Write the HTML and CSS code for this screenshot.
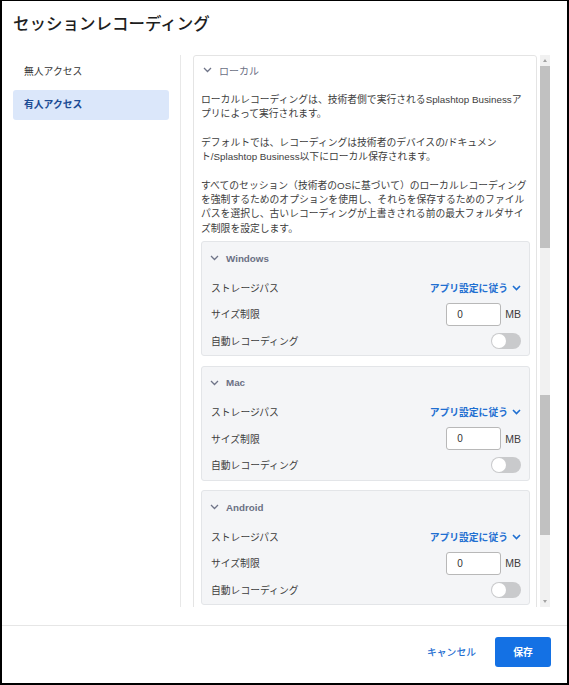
FILE: index.html
```html
<!DOCTYPE html>
<html lang="ja">
<head>
<meta charset="utf-8">
<link rel="stylesheet" href="styles.css">
</head>
<body>
<div class="frame">
  <div class="header"><h1 class="title">セッションレコーディング</h1></div>
  <div class="main">
    <nav class="nav">
      <div class="nav-item">無人アクセス</div>
      <div class="nav-item active">有人アクセス</div>
    </nav>
    <div class="vdivider"></div>
    <div class="scroll">
      <div class="viewport">
        <div class="card">
          <div class="section-head">
            <svg class="chev" width="9" height="6" viewBox="0 0 9 6"><polyline points="1,1 4.5,4.5 8,1" fill="none" stroke="#6f7488" stroke-width="1.3"/></svg>
            <span>ローカル</span>
          </div>
          <p class="para">ローカルレコーディングは、技術者側で実行されるSplashtop Businessアプリによって実行されます。</p>
          <p class="para">デフォルトでは、レコーディングは技術者のデバイスの/ドキュメン<span class="nw">ト/Splashtop</span> Business以下にローカル保存されます。</p>
          <p class="para">すべてのセッション（技術者のOSに基づいて）のローカルレコーディングを強制するためのオプションを使用し、それらを保存するためのファイルパスを選択し、古いレコーディングが上書きされる前の最大フォルダサイズ制限を設定します。</p>

          <div class="os">
            <div class="os-head">
              <svg class="chev" width="9" height="6" viewBox="0 0 9 6"><polyline points="1,1 4.5,4.5 8,1" fill="none" stroke="#6f7488" stroke-width="1.3"/></svg>
              <span>Windows</span>
            </div>
            <div class="row"><span>ストレージパス</span><span class="link">アプリ設定に従う<svg width="9" height="6" viewBox="0 0 9 6"><polyline points="1,1 4.5,4.5 8,1" fill="none" stroke="#1f6fd1" stroke-width="1.6"/></svg></span></div>
            <div class="row"><span>サイズ制限</span><span class="size"><span class="input">0</span><span>MB</span></span></div>
            <div class="row"><span>自動レコーディング</span><span class="toggle"><span class="knob"></span></span></div>
          </div>

          <div class="os">
            <div class="os-head">
              <svg class="chev" width="9" height="6" viewBox="0 0 9 6"><polyline points="1,1 4.5,4.5 8,1" fill="none" stroke="#6f7488" stroke-width="1.3"/></svg>
              <span>Mac</span>
            </div>
            <div class="row"><span>ストレージパス</span><span class="link">アプリ設定に従う<svg width="9" height="6" viewBox="0 0 9 6"><polyline points="1,1 4.5,4.5 8,1" fill="none" stroke="#1f6fd1" stroke-width="1.6"/></svg></span></div>
            <div class="row"><span>サイズ制限</span><span class="size"><span class="input">0</span><span>MB</span></span></div>
            <div class="row"><span>自動レコーディング</span><span class="toggle"><span class="knob"></span></span></div>
          </div>

          <div class="os">
            <div class="os-head">
              <svg class="chev" width="9" height="6" viewBox="0 0 9 6"><polyline points="1,1 4.5,4.5 8,1" fill="none" stroke="#6f7488" stroke-width="1.3"/></svg>
              <span>Android</span>
            </div>
            <div class="row"><span>ストレージパス</span><span class="link">アプリ設定に従う<svg width="9" height="6" viewBox="0 0 9 6"><polyline points="1,1 4.5,4.5 8,1" fill="none" stroke="#1f6fd1" stroke-width="1.6"/></svg></span></div>
            <div class="row"><span>サイズ制限</span><span class="size"><span class="input">0</span><span>MB</span></span></div>
            <div class="row"><span>自動レコーディング</span><span class="toggle"><span class="knob"></span></span></div>
          </div>
        </div>
      </div>
      <div class="scrollbar">
        <div class="arrow up"></div>
        <div class="thumb t1"></div>
        <div class="gap1"></div>
        <div class="thumb t2"></div>
        <div class="fill"></div>
        <div class="arrow down"></div>
      </div>
    </div>
  </div>
  <div class="footer">
    <button class="cancel">キャンセル</button>
    <button class="save">保存</button>
  </div>
</div>
</body>
</html>
```

FILE: styles.css
```css
* { box-sizing: border-box; }
html, body { margin: 0; padding: 0; background: #fff; }
body {
  font-family: "Liberation Sans", "Noto Sans CJK JP", sans-serif;
  color: #3a3a3a;
}
.frame {
  width: 569px;
  height: 685px;
  border: 2px solid #000;
  border-top-width: 1px;
  display: flex;
  flex-direction: column;
  background: #fff;
}
.header { padding: 11px 0 0 11px; height: 54px; }
.title {
  margin: 0;
  font-size: 16.5px;
  line-height: 24px;
  font-weight: 500;
  color: #1e1e1e;
}
.main {
  display: flex;
  height: 552px;
  padding-left: 11px;
}
.nav {
  width: 156px;
  display: flex;
  flex-direction: column;
  gap: 3px;
  padding-top: 2px;
}
.nav-item {
  height: 30px;
  line-height: 30px;
  padding-left: 11px;
  font-size: 9.8px;
  color: #333;
  border-radius: 3px;
}
.nav-item.active {
  background: #dbe7fa;
  color: #1c4c95;
  font-weight: 700;
}
.vdivider { width: 1px; margin-left: 11px; background: #e8e8e8; }
.scroll {
  flex: 1;
  display: flex;
  padding-left: 12px;
  padding-right: 16px;
  gap: 3px;
}
.viewport { width: 344px; overflow: hidden; }
.card {
  border: 1px solid #e4e4e4;
  border-radius: 3px;
  padding: 6px 6px 0 7px;
  font-size: 9.8px;
}
.section-head {
  display: flex;
  align-items: center;
  gap: 7px;
  height: 16px;
  padding-left: 2px;
  color: #6b7084;
  font-size: 10px;
}
.para {
  margin: 10px 0 14px;
  line-height: 14.4px;
  color: #3d3d3d;
}
.section-head + .para { margin-top: 15px; }
.para:last-of-type { margin-bottom: 5px; }
.nw { white-space: nowrap; }
.os {
  background: #f4f5f7;
  border: 1px solid #e3e5e8;
  border-radius: 3px;
  padding: 7px 8px 1.5px 8px;
  margin-bottom: 9.5px;
}
.os-head {
  display: flex;
  align-items: center;
  gap: 7px;
  height: 18px;
  margin-bottom: 7px;
  color: #6b7084;
  font-weight: 700;
  font-size: 9.8px;
}
.row {
  height: 26.5px;
  display: flex;
  align-items: center;
  justify-content: space-between;
  padding-left: 1px;
  color: #3d3d3d;
}
.link {
  display: flex;
  align-items: center;
  gap: 4px;
  color: #1f6fd1;
  font-weight: 700;
}
.size { display: flex; align-items: center; gap: 4px; font-size: 10.5px; }
.input {
  width: 55px;
  height: 23px;
  border: 1px solid #b8b8b8;
  border-radius: 3px;
  background: #fff;
  padding-left: 10px;
  line-height: 21px;
  font-size: 10px;
  color: #333;
}
.toggle {
  width: 30px;
  height: 16px;
  border-radius: 8px;
  background: #c9cacc;
  display: flex;
  align-items: center;
  padding-left: 1px;
}
.knob {
  width: 14px;
  height: 14px;
  border-radius: 50%;
  background: #fff;
}
.scrollbar {
  width: 10px;
  background: #f1f1f1;
  display: flex;
  flex-direction: column;
  align-items: center;
}
.arrow { width: 10px; height: 11px; display: flex; align-items: center; justify-content: center; }
.arrow::before {
  content: "";
  border-left: 2.5px solid transparent;
  border-right: 2.5px solid transparent;
}
.arrow.up::before { border-bottom: 3px solid #a3a3a3; }
.arrow.down::before { border-top: 3px solid #a3a3a3; }
.thumb { width: 10px; background: #c1c1c1; }
.t1 { height: 182px; }
.gap1 { height: 147px; }
.t2 { height: 140px; }
.fill { flex: 1; }
.footer {
  margin-top: 18px;
  border-top: 1px solid #e6e6e6;
  flex: 1;
  display: flex;
  justify-content: flex-end;
  align-items: flex-start;
  padding: 11px 16px 0 0;
  gap: 9px;
}
button {
  font-family: "Liberation Sans", "Noto Sans CJK JP", sans-serif;
  font-size: 9.8px;
  border: none;
  cursor: pointer;
}
.cancel {
  background: transparent;
  color: #1f6fd1;
  font-weight: 500;
  height: 30px;
  padding: 0 10px;
}
.save {
  width: 56px;
  height: 30px;
  border-radius: 3px;
  background: #1471e4;
  color: #fff;
  font-weight: 700;
}
```
